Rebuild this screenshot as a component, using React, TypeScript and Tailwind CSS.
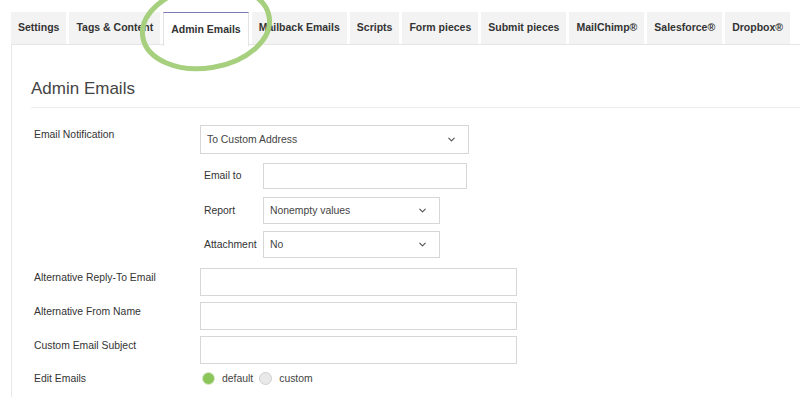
import { ChevronDown } from 'lucide-react';

const tabs = [
    'Settings',
    'Tags & Content',
    'Admin Emails',
    'Mailback Emails',
    'Scripts',
    'Form pieces',
    'Submit pieces',
    'MailChimp®',
    'Salesforce®',
    'Dropbox®',
];

function Select({ value, width, height }: { value: string; width: string; height: string }) {
    return (
        <div className={`flex items-center justify-between border border-[#d6d6d6] bg-white pl-[6px] pr-[11px] text-[#444] ${width} ${height}`}>
            <span>{value}</span>
            <ChevronDown className="h-[11px] w-[11px] text-[#555]" strokeWidth={2.5} />
        </div>
    );
}

function TextInput({ width, height }: { width: string; height: string }) {
    return <div className={`border border-[#d6d6d6] bg-white ${width} ${height}`} />;
}

export default function App() {
    return (
        <div className="relative h-[397px] w-[800px] overflow-hidden bg-white pt-[12px] pl-[11px] font-['Liberation_Sans',Arial,sans-serif] text-[#333]">
            {/* Tab strip */}
            <div className="flex h-[33px] gap-[3px] border-b border-[#e6e6e6]">
                {tabs.map((t) =>
                    t === 'Admin Emails' ? (
                        <div
                            key={t}
                            className="relative -mb-px flex h-[34px] shrink-0 items-center whitespace-nowrap border-x border-t border-x-[#e3e3e3] border-t-[#7a7ab8] bg-white px-[7px] text-[10.5px] font-bold"
                        >
                            {t}
                        </div>
                    ) : (
                        <div
                            key={t}
                            className="flex shrink-0 items-center whitespace-nowrap bg-[#f3f3f3] px-[7px] text-[10.5px] font-bold text-[#333]"
                        >
                            {t}
                        </div>
                    )
                )}
            </div>

            {/* Panel */}
            <div className="h-full border-l border-[#e8e8e8] pl-[19px]">
                <h2 className="pt-[34px] pb-[8px] text-[17px] leading-[20px] text-[#444]">Admin Emails</h2>
                <div className="border-t border-[#ececec]" />

                <div className="pl-[3px] pt-[17px] text-[10.4px]">
                    {/* Email Notification */}
                    <div className="flex">
                        <div className="w-[166px] pt-[2px]">Email Notification</div>
                        <div className="flex flex-col">
                            <Select value="To Custom Address" width="w-[269px]" height="h-[29px]" />
                            <div className="mt-[9px] flex flex-col pl-[4px]">
                                <div className="flex items-center">
                                    <div className="w-[59px]">Email to</div>
                                    <TextInput width="w-[204px]" height="h-[26px]" />
                                </div>
                                <div className="mt-[8px] flex items-center">
                                    <div className="w-[59px]">Report</div>
                                    <Select value="Nonempty values" width="w-[177px]" height="h-[27px]" />
                                </div>
                                <div className="mt-[7px] flex items-center">
                                    <div className="w-[59px]">Attachment</div>
                                    <Select value="No" width="w-[177px]" height="h-[27px]" />
                                </div>
                            </div>
                        </div>
                    </div>

                    <div className="mt-[10px] flex flex-col gap-[6px]">
                        {['Alternative Reply-To Email', 'Alternative From Name', 'Custom Email Subject'].map((l) => (
                            <div key={l} className="flex">
                                <div className="w-[166px] pt-[2px]">{l}</div>
                                <TextInput width="w-[317px]" height="h-[28px]" />
                            </div>
                        ))}
                    </div>

                    <div className="mt-[7px] flex items-center">
                        <div className="w-[166px]">Edit Emails</div>
                        <div className="flex items-center text-[#444]">
                            <span className="ml-[2px] h-[13px] w-[13px] rounded-full border border-[#d8e8c8] bg-[#8cc65a]" />
                            <span className="ml-[7px]">default</span>
                            <span className="ml-[6px] h-[13px] w-[13px] rounded-full border border-[#cfcfcf] bg-[#e9e9e9]" />
                            <span className="ml-[7px]">custom</span>
                        </div>
                    </div>
                </div>
            </div>

            {/* Highlight circle drawn over the tabs */}
            <svg className="pointer-events-none absolute left-[130px] top-[-25px]" width="152" height="104" viewBox="0 0 152 104">
                <ellipse cx="76" cy="52" rx="64" ry="41" fill="none" stroke="#a6cf7e" strokeWidth="5" transform="rotate(-9 76 52)" />
            </svg>
        </div>
    );
}
